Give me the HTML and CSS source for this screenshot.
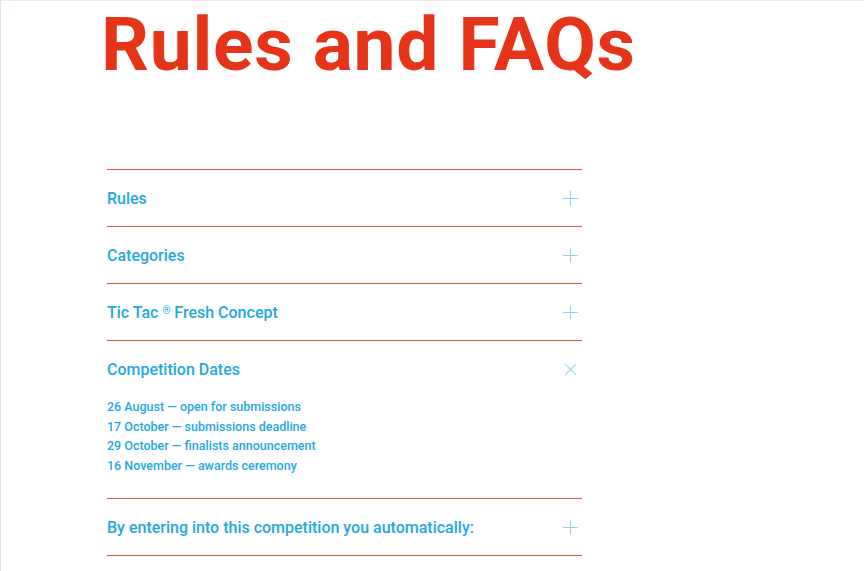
FILE: index.html
```html
<!DOCTYPE html>
<html lang="en">
<head>
<meta charset="utf-8">
<title>Rules and FAQs</title>
<link rel="stylesheet" href="styles.css">
</head>
<body>
<div class="page">
  <h1 class="title">Rules and FAQs</h1>
  <div class="faq">
    <div class="item">
      <div class="head"><span class="label">Rules</span><span class="icon plus"></span></div>
    </div>
    <div class="item">
      <div class="head"><span class="label">Categories</span><span class="icon plus"></span></div>
    </div>
    <div class="item">
      <div class="head"><span class="label">Tic Tac <sup class="reg">®</sup> Fresh Concept</span><span class="icon plus"></span></div>
    </div>
    <div class="item open">
      <div class="head"><span class="label">Competition Dates</span><span class="icon close"></span></div>
      <div class="body">
        <p>26 August — open for submissions</p>
        <p>17 October — submissions deadline</p>
        <p>29 October — finalists announcement</p>
        <p>16 November — awards ceremony</p>
      </div>
    </div>
    <div class="item">
      <div class="head"><span class="label">By entering into this competition you automatically:</span><span class="icon plus"></span></div>
    </div>
  </div>
</div>
</body>
</html>
```
FILE: styles.css
```css
html, body {
  margin: 0;
  padding: 0;
  background: #fff;
}
body {
  font-family: Roboto, "Noto Sans", sans-serif;
  height: 571px;
  overflow: hidden;
}
.page {
  box-sizing: border-box;
  height: 571px;
  border-left: 1px solid #f6d9d4;
  border-top: 1px solid #f2e6e6;
  padding-left: 106px;
}
.title {
  margin: 0 0 0 -6px;
  padding-top: 0;
  height: 168px;
  box-sizing: border-box;
  font-family: Roboto, sans-serif;
  font-weight: 700;
  font-size: 75px;
  line-height: 86px;
  color: #e5341a;
  letter-spacing: 0.7px;
}
.faq {
  width: 475px;
  border-top: 1px solid #e8553b;
}
.item {
  border-bottom: 1px solid #e8553b;
}
.head {
  height: 56px;
  display: flex;
  align-items: center;
  justify-content: space-between;
}
.label {
  font-size: 16px;
  font-weight: 500;
  color: #22a9dc;
}
.reg {
  font-size: 10px;
  vertical-align: 4px;
}
.icon {
  position: relative;
  width: 15px;
  height: 15px;
  margin-right: 4px;
}
.icon::before, .icon::after {
  content: "";
  position: absolute;
  left: 7px;
  top: 0;
  width: 1px;
  height: 15px;
  background: #8dd2ef;
}
.icon.plus::after {
  transform: rotate(90deg);
}
.icon.close::before {
  transform: rotate(45deg);
}
.icon.close::after {
  transform: rotate(-45deg);
}
.body {
  padding: 0 0 23px;
}
.body p {
  margin: 0;
  font-size: 12.5px;
  line-height: 19.5px;
  font-weight: 500;
  color: #22a9dc;
}
```
